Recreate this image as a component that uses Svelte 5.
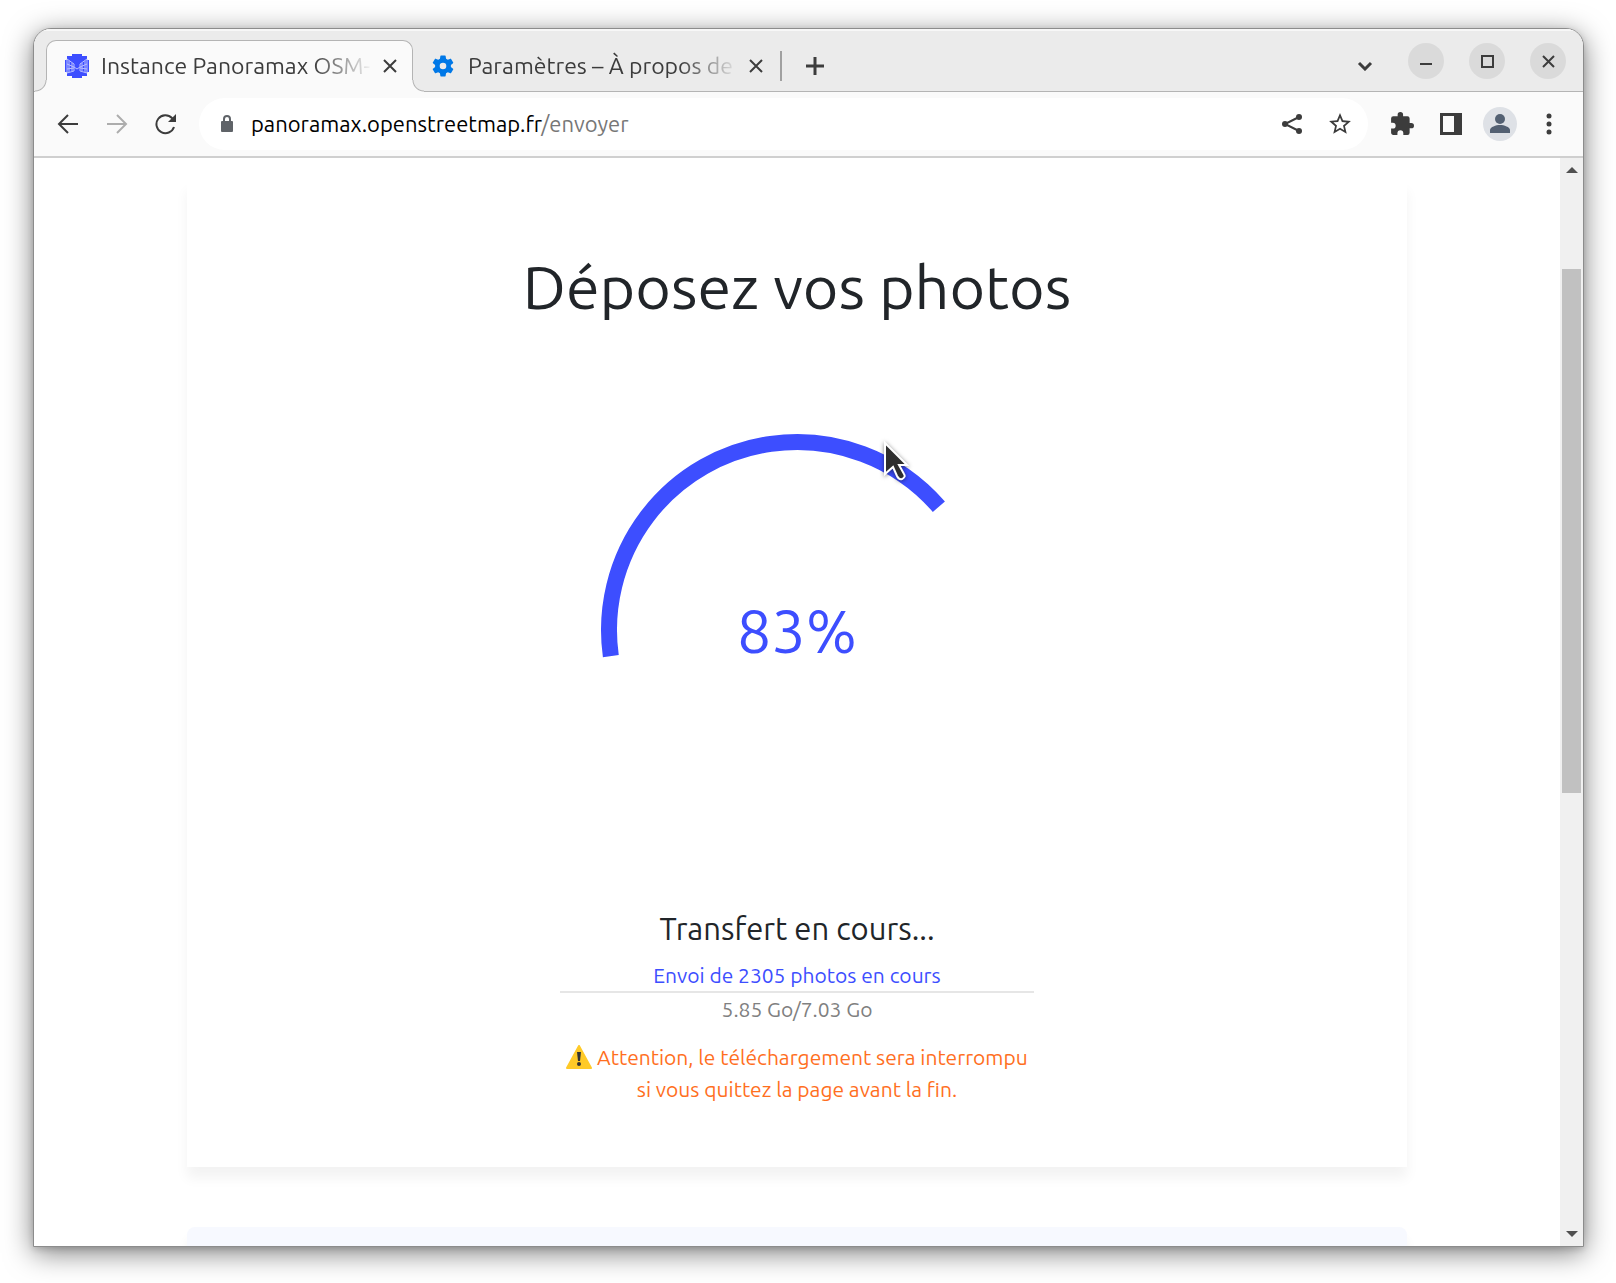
<script>
  const percent = 83;
  const photoCount = 2305;
  const sent = '5.85 Go';
  const total = '7.03 Go';

  const tabs = [
    { title: 'Instance Panoramax OSM-', icon: 'panoramax', active: true },
    { title: 'Paramètres – À propos de', icon: 'gear', active: false }
  ];

  // Scrollbar thumb, as shares of the track
  const thumbTop = 10.2;
  const thumbHeight = 48.2;
</script>

<svelte:head>
  <title>Instance Panoramax OSM-FR</title>
</svelte:head>

<div class="desktop">
  <div class="window">
    <header class="tabstrip">
      <div class="tabs">
        {#each tabs as tab}
          <div class="tab" class:active={tab.active}>
            {#if tab.icon === 'panoramax'}
              <svg class="favicon" viewBox="0 0 26 26" aria-hidden="true">
                <path fill="#3d4eff" d="M8 1h10v2h5v4h2v12h-2v4h-5v2H8v-2H3v-4H1V7h2V3h5z" />
                <path fill="none" stroke="#b9bfff" d="M3 6l7 5v7l-7 2zM5 8v11M8 10v8M3 11l7 3M3 16l7-1M23 6l-7 5v7l7 2zM21 8v11M18 10v8M23 11l-7 3M23 16l-7-1M10 14l3 2 3-2" />
              </svg>
            {:else}
              <svg class="favicon" viewBox="2 2 20 20" aria-hidden="true">
                <path fill="#0078e7" d="M19.14 12.94c.04-.3.06-.61.06-.94 0-.32-.02-.64-.07-.94l2.03-1.58a.49.49 0 0 0 .12-.61l-1.92-3.32a.49.49 0 0 0-.59-.22l-2.39.96a7 7 0 0 0-1.62-.94l-.36-2.54a.48.48 0 0 0-.48-.41h-3.84a.48.48 0 0 0-.47.41l-.36 2.54c-.59.24-1.13.57-1.62.94l-2.39-.96a.48.48 0 0 0-.59.22L2.74 8.87a.47.47 0 0 0 .12.61l2.03 1.58c-.05.3-.09.63-.09.94s.02.64.07.94l-2.03 1.58a.49.49 0 0 0-.12.61l1.92 3.32c.12.22.37.29.59.22l2.39-.96c.5.38 1.03.7 1.62.94l.36 2.54c.05.24.24.41.48.41h3.84c.24 0 .44-.17.47-.41l.36-2.54a7 7 0 0 0 1.62-.94l2.39.96c.22.08.47 0 .59-.22l1.92-3.32a.47.47 0 0 0-.12-.61zM12 15a3 3 0 1 1 0-6 3 3 0 0 1 0 6z" />
              </svg>
            {/if}
            <span class="tab-title">{tab.title}</span>
            <button class="icon tab-close" aria-label="Fermer l'onglet">
              <svg width="14" height="14" viewBox="0 0 14 14"><path d="M1 1l12 12M13 1L1 13" /></svg>
            </button>
          </div>
        {/each}
        <span class="separator"></span>
        <button class="icon new-tab" aria-label="Nouvel onglet">
          <svg width="20" height="20" viewBox="0 0 20 20"><path d="M10 1v18M1 10h18" /></svg>
        </button>
      </div>
      <div class="controls">
        <button class="icon tab-search" aria-label="Rechercher dans les onglets">
          <svg width="16" height="20" viewBox="0 0 16 20"><path d="M2 12l6 6 6-6" /></svg>
        </button>
        <button class="icon round" aria-label="Réduire">
          <svg width="14" height="14" viewBox="0 0 14 14"><path d="M1 10h12" /></svg>
        </button>
        <button class="icon round" aria-label="Agrandir">
          <svg width="13" height="13" viewBox="0 0 13 13"><path d="M1 1h11v11H1z" /></svg>
        </button>
        <button class="icon round" aria-label="Fermer">
          <svg width="13" height="13" viewBox="0 0 13 13"><path d="M1 1l11 11M12 1L1 12" /></svg>
        </button>
      </div>
    </header>

    <nav class="toolbar">
      <div class="history">
        <button class="icon" aria-label="Retour">
          <svg width="22" height="22" viewBox="0 0 22 22"><path d="M21 11H2M11 2l-9 9 9 9" /></svg>
        </button>
        <button class="icon" aria-label="Avancer" disabled>
          <svg width="22" height="22" viewBox="0 0 22 22"><path d="M1 11h19M11 2l9 9-9 9" /></svg>
        </button>
        <button class="icon" aria-label="Actualiser">
          <svg width="22" height="22" viewBox="0 0 22 22">
            <path d="M19 14a9 9 0 1 1-2-9l2 2" />
            <path class="solid" d="M21 1v8h-8z" />
          </svg>
        </button>
      </div>
      <div class="omnibox">
        <svg class="lock" width="14" height="18" viewBox="0 0 14 18" aria-hidden="true">
          <rect x="1" y="6" width="12" height="11" rx="1" fill="#5f6368" />
          <path d="M4 7V4a3 3 0 0 1 6 0v3" fill="none" stroke="#5f6368" stroke-width="2" />
        </svg>
        <a class="url" href="#envoyer">panoramax.openstreetmap.fr<span>/envoyer</span></a>
        <button class="icon" aria-label="Partager">
          <svg width="22" height="22" viewBox="0 0 22 22">
            <path d="M18 4L4 11l14 7" />
            <g class="solid"><circle cx="18" cy="4" r="3" /><circle cx="4" cy="11" r="3" /><circle cx="18" cy="18" r="3" /></g>
          </svg>
        </button>
        <button class="icon" aria-label="Ajouter aux favoris">
          <svg width="24" height="24" viewBox="1 1 22 22">
            <path class="solid" d="M22 9.24l-7.19-.62L12 2 9.19 8.63 2 9.24l5.46 4.73L5.82 21 12 17.27 18.18 21l-1.63-7.03zM12 15.4l-3.76 2.27 1-4.28-3.32-2.88 4.38-.38L12 6.1l1.71 4.04 4.38.38-3.32 2.88 1 4.28z" />
          </svg>
        </button>
      </div>
      <div class="actions">
        <button class="icon" aria-label="Extensions">
          <svg width="24" height="24" viewBox="1 1 22 22">
            <path class="solid" d="M20.5 11H19V7a2 2 0 0 0-2-2h-4V3.500a2.500 2.500 0 0 0-5 0V5H4a2 2 0 0 0-2 2v3.800h1.500a2.700 2.700 0 0 1 0 5.400H2V20c0 1.100.9 2 2 2h3.800v-1.500a2.700 2.700 0 0 1 5.400 0V22H17a2 2 0 0 0 2-2v-4h1.500a2.500 2.500 0 0 0 0-5z" />
          </svg>
        </button>
        <button class="icon" aria-label="Panneau latéral">
          <svg width="24" height="24" viewBox="0 0 24 24"><path class="solid" fill-rule="evenodd" d="M1 1h22v22H1zM4 4v16h11V4z" /></svg>
        </button>
        <button class="icon avatar" aria-label="Profil">
          <svg width="20" height="20" viewBox="0 0 20 20">
            <circle cx="10" cy="5" r="5" />
            <path d="M0 19v-3c0-3 6-5 10-5s10 2 10 5v3z" />
          </svg>
        </button>
        <button class="icon" aria-label="Menu">
          <svg width="24" height="24" viewBox="0 0 24 24">
            <g class="solid"><circle cx="12" cy="4" r="2.500" /><circle cx="12" cy="12" r="2.500" /><circle cx="12" cy="20" r="2.500" /></g>
          </svg>
        </button>
      </div>
    </nav>

    <div class="viewport">
      <main>
        <section class="card">
          <h1>Déposez vos photos</h1>

          <div class="loader">
            <svg class="ring" viewBox="0 0 400 400" aria-hidden="true">
              <circle cx="200" cy="200" r="188" pathLength="360" />
            </svg>
            <span class="percent">{percent}%</span>
            <svg class="pointer" width="26" height="42" viewBox="0 0 26 42" aria-hidden="true">
              <path d="M2 2v31l8-7 4 9q2 4 5 3 4-2 2-5l-5-9h8z" />
            </svg>
          </div>

          <div class="status">
            <h2>Transfert en cours...</h2>
            <p class="sending">Envoi de {photoCount} photos en cours</p>
            <p class="size">{sent}/{total}</p>
            <p class="warning">
              <svg width="26" height="24" viewBox="0 0 26 24" aria-hidden="true">
                <path d="M13 1L25 23H1z" fill="#ffca28" stroke="#ffca28" stroke-width="2" stroke-linejoin="round" />
                <path d="M11 7h4l-1 9h-2z" fill="#333" />
                <circle cx="13" cy="19" r="2" fill="#333" />
              </svg>
              Attention, le téléchargement sera interrompu<br />si vous quittez la page avant la fin.
            </p>
          </div>
        </section>
        <section class="card next"></section>
      </main>

      <div class="scrollbar">
        <svg width="12" height="6" viewBox="0 0 12 6"><path d="M6 0l6 6H0z" /></svg>
        <div class="thumb" style="top: {thumbTop}%; height: {thumbHeight}%"></div>
        <svg width="12" height="6" viewBox="0 0 12 6"><path d="M0 0h12L6 6z" /></svg>
      </div>
    </div>
  </div>
</div>

<style>
  :global(body) {
    margin: 0;
    background: #fff;
  }

  .desktop {
    box-sizing: border-box;
    height: 100vh;
    padding: 28px 32px 36px 33px;
    font-family: Ubuntu, 'Noto Sans', sans-serif;
    font-weight: 400;
    color: #212529;
  }

  .window {
    box-sizing: border-box;
    display: flex;
    flex-direction: column;
    height: 100%;
    overflow: hidden;
    border: 1px solid #8c8c8c;
    border-radius: 18px 18px 0 0;
    background: #fff;
    box-shadow: 0 2px 6px rgba(0, 0, 0, 0.15), 0 6px 28px rgba(0, 0, 0, 0.5);
  }

  button {
    padding: 0;
    border: 0;
    background: none;
  }

  .icon {
    display: flex;
    align-items: center;
    justify-content: center;
    flex: none;
  }

  .icon svg {
    fill: none;
    stroke: #3c3c3c;
    stroke-width: 2;
  }

  .icon .solid {
    fill: #3c3c3c;
    stroke: none;
  }

  .tabstrip {
    display: flex;
    justify-content: space-between;
    flex: none;
    height: 63px;
    box-sizing: border-box;
    border-bottom: 1px solid #b4b4b4;
    background: #ebebeb;
    box-shadow: inset 0 2px #f7f7f7;
  }

  .tabs {
    display: flex;
    align-items: flex-end;
    padding-left: 12px;
  }

  .tab {
    position: relative;
    display: flex;
    align-items: center;
    box-sizing: border-box;
    width: 367px;
    height: 51px;
    padding: 0 9px 0 19px;
  }

  .tab.active {
    height: 52px;
    margin-bottom: -1px;
    padding: 0 7px 2px 17px;
    border: 1px solid #b4b4b4;
    border-bottom: 0;
    border-radius: 10px 10px 0 0;
    background: #fafafa;
  }

  /* Curved feet on both sides of the active tab */
  .tab.active::before,
  .tab.active::after {
    content: '';
    position: absolute;
    bottom: 0;
    width: 12px;
    height: 12px;
  }

  .tab.active::before {
    right: 100%;
    background: radial-gradient(circle at 0 0, #ebebeb 10px, #b4b4b4 11px, #b4b4b4 11px, #fafafa 12px);
  }

  .tab.active::after {
    left: 100%;
    background: radial-gradient(circle at 100% 0, #ebebeb 10px, #b4b4b4 11px, #b4b4b4 11px, #fafafa 12px);
  }

  .favicon {
    flex: none;
    width: 26px;
    height: 26px;
  }

  .tab-title {
    flex: 1;
    margin-left: 11px;
    overflow: hidden;
    white-space: nowrap;
    font-size: 23px;
    line-height: 28px;
    color: #3c3c3c;
    mask-image: linear-gradient(to left, transparent, #000 60px);
  }

  .tab:not(.active) .favicon {
    width: 22px;
    height: 22px;
  }

  .tab:not(.active) .tab-title {
    margin-left: 14px;
  }

  .tab-close {
    width: 26px;
    height: 30px;
    margin: 0 2px 0 4px;
  }

  .separator {
    width: 2px;
    height: 30px;
    margin-bottom: 10px;
    background: #a0a0a0;
  }

  .new-tab {
    width: 30px;
    height: 30px;
    margin: 0 0 10px 18px;
  }

  .new-tab svg {
    stroke-width: 3;
  }

  .controls {
    display: flex;
    align-items: center;
    gap: 25px;
    padding: 2px 17px 0 0;
  }

  .tab-search {
    margin-right: 10px;
  }

  .tab-search svg {
    stroke-width: 3;
  }

  .round {
    width: 36px;
    height: 36px;
    border-radius: 50%;
    background: #dadada;
  }

  .toolbar {
    display: flex;
    align-items: center;
    flex: none;
    box-sizing: border-box;
    height: 66px;
    padding: 0 22px 0 23px;
    border-bottom: 2px solid #cfcfcf;
    background: #fafafa;
  }

  .history,
  .actions {
    display: flex;
    align-items: center;
    gap: 27px;
  }

  .actions {
    gap: 25px;
  }

  .history button:disabled {
    opacity: 0.4;
  }

  .omnibox {
    display: flex;
    align-items: center;
    flex: 1;
    gap: 25px;
    height: 52px;
    margin: 0 22px;
    padding: 0 16px 0 21px;
    border-radius: 26px;
    background: #fff;
  }

  .url {
    flex: 1;
    margin-left: -8px;
    font-size: 22px;
    line-height: 28px;
    color: #000;
    text-decoration: none;
  }

  .url span {
    color: #777;
  }

  .avatar {
    width: 34px;
    height: 34px;
    margin: 0 -5px;
    border-radius: 50%;
    background: #dee1e6;
  }

  .avatar svg {
    fill: #536072;
    stroke: none;
  }

  .viewport {
    display: flex;
    flex: 1;
    min-height: 0;
  }

  main {
    flex: 1;
    overflow: hidden;
  }

  .scrollbar {
    position: relative;
    display: flex;
    flex-direction: column;
    align-items: center;
    justify-content: space-between;
    box-sizing: border-box;
    width: 23px;
    padding: 9px 0;
    background: #f0f0f0;
    fill: #505050;
  }

  .thumb {
    position: absolute;
    left: 2px;
    right: 2px;
    background: #c1c1c1;
  }

  .card {
    display: flex;
    flex-direction: column;
    align-items: center;
    box-sizing: border-box;
    width: 80%;
    margin: 22px auto 60px;
    padding: 62px 0;
    background: #fff;
    box-shadow: 0 11px 12px rgba(0, 0, 0, 0.05);
  }

  .next {
    height: 300px;
    border-radius: 8px;
    background: #f7f9ff;
  }

  h1 {
    margin: 0;
    font-size: 61px;
    line-height: 90px;
    font-weight: 400;
  }

  .loader {
    position: relative;
    display: grid;
    place-items: center;
    width: 400px;
    height: 400px;
    margin: 98px 0 79px;
  }

  .ring,
  .percent {
    grid-area: 1 / 1;
  }

  .ring {
    width: 100%;
    fill: none;
    stroke: #3d4eff;
    stroke-width: 16;
    transform: rotate(172deg);
  }

  .ring circle {
    stroke-dasharray: 147 213;
  }

  .percent {
    font-size: 61px;
    color: #3d4eff;
  }

  .pointer {
    position: absolute;
    top: 11px;
    left: 286px;
    fill: #2e2e2e;
    stroke: #fff;
    stroke-width: 2;
    filter: drop-shadow(0 1px 2px rgba(0, 0, 0, 0.5));
  }

  .status {
    text-align: center;
    font-size: 21px;
    line-height: 32px;
  }

  h2 {
    margin: 0 0 10px;
    font-size: 31px;
    line-height: 40px;
    font-weight: 400;
  }

  .status p {
    margin: 0;
  }

  .status .sending {
    border-bottom: 2px solid #e6e6e6;
    color: #3d4eff;
  }

  .size {
    color: #808080;
  }

  .status .warning {
    margin-top: 16px;
    padding: 0 6px;
    color: #ff6f1e;
  }

  .warning svg {
    vertical-align: -4px;
  }
</style>
